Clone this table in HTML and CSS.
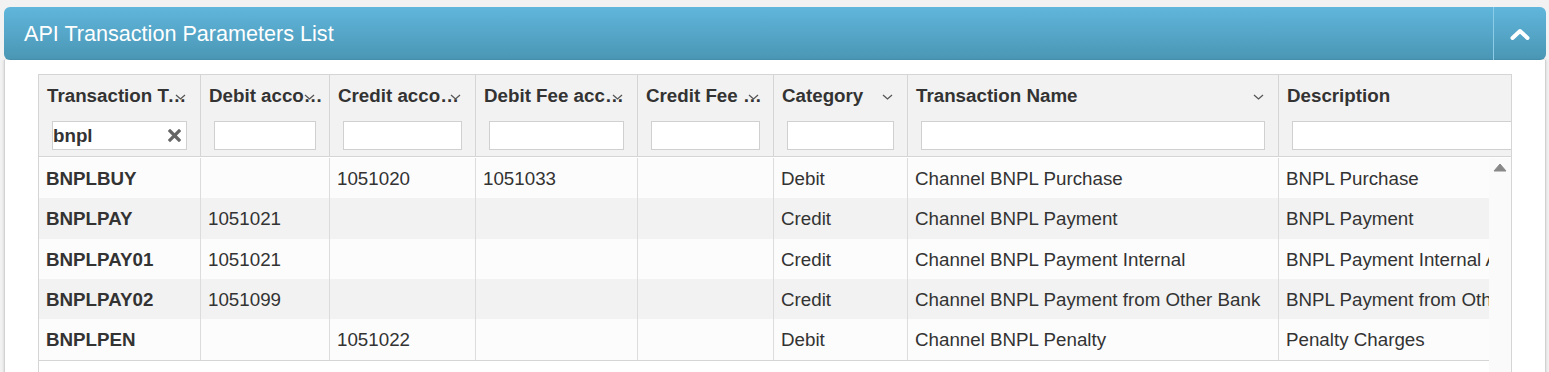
FILE: index.html
```html
<!DOCTYPE html>
<html lang="en">
<head>
<meta charset="utf-8">
<title>API Transaction Parameters List</title>
<link rel="stylesheet" href="styles.css">
</head>
<body>
<div class="panel">
  <div class="panel-head">
    <h2 class="panel-title">API Transaction Parameters List</h2>
    <button class="collapse-btn" type="button" aria-label="Collapse">
      <svg width="20" height="12" viewBox="0 0 20 12"><polyline points="2.5,10 10,3 17.5,10" fill="none" stroke="#fff" stroke-width="4" stroke-linecap="round" stroke-linejoin="round"/></svg>
    </button>
  </div>
  <div class="panel-body">
    <div class="grid">
      <div class="grid-head">
        <div class="hcell"><div class="htitle">Transaction Type</div><svg class="sort" width="11" height="6" viewBox="0 0 11 6"><polyline points="1,1 5.5,5 10,1" fill="none" stroke="#555" stroke-width="1.3"/></svg><div class="filter"><input class="finput" type="text" value="bnpl"><svg class="clear" width="13" height="13" viewBox="0 0 13 13"><path d="M2 2 L11 11 M11 2 L2 11" stroke="#666" stroke-width="3.2" stroke-linecap="square"/></svg></div></div>
        <div class="hcell"><div class="htitle">Debit account</div><svg class="sort" width="11" height="6" viewBox="0 0 11 6"><polyline points="1,1 5.5,5 10,1" fill="none" stroke="#555" stroke-width="1.3"/></svg><div class="filter"><input class="finput" type="text"></div></div>
        <div class="hcell"><div class="htitle">Credit account</div><svg class="sort" width="11" height="6" viewBox="0 0 11 6"><polyline points="1,1 5.5,5 10,1" fill="none" stroke="#555" stroke-width="1.3"/></svg><div class="filter"><input class="finput" type="text"></div></div>
        <div class="hcell"><div class="htitle">Debit Fee account</div><svg class="sort" width="11" height="6" viewBox="0 0 11 6"><polyline points="1,1 5.5,5 10,1" fill="none" stroke="#555" stroke-width="1.3"/></svg><div class="filter"><input class="finput" type="text"></div></div>
        <div class="hcell"><div class="htitle">Credit Fee account</div><svg class="sort" width="11" height="6" viewBox="0 0 11 6"><polyline points="1,1 5.5,5 10,1" fill="none" stroke="#555" stroke-width="1.3"/></svg><div class="filter"><input class="finput" type="text"></div></div>
        <div class="hcell"><div class="htitle">Category</div><svg class="sort" width="11" height="6" viewBox="0 0 11 6"><polyline points="1,1 5.5,5 10,1" fill="none" stroke="#555" stroke-width="1.3"/></svg><div class="filter"><input class="finput" type="text"></div></div>
        <div class="hcell"><div class="htitle">Transaction Name</div><svg class="sort" width="11" height="6" viewBox="0 0 11 6"><polyline points="1,1 5.5,5 10,1" fill="none" stroke="#555" stroke-width="1.3"/></svg><div class="filter"><input class="finput" type="text"></div></div>
        <div class="hcell"><div class="htitle">Description</div><div class="filter"><input class="finput" type="text"></div></div>
      </div>
      <div class="grid-body">
        <div class="rows">
          <div class="row">
            <div class="cell strong">BNPLBUY</div><div class="cell"></div><div class="cell">1051020</div><div class="cell">1051033</div><div class="cell"></div><div class="cell">Debit</div><div class="cell">Channel BNPL Purchase</div><div class="cell">BNPL Purchase</div>
          </div>
          <div class="row alt">
            <div class="cell strong">BNPLPAY</div><div class="cell">1051021</div><div class="cell"></div><div class="cell"></div><div class="cell"></div><div class="cell">Credit</div><div class="cell">Channel BNPL Payment</div><div class="cell">BNPL Payment</div>
          </div>
          <div class="row">
            <div class="cell strong">BNPLPAY01</div><div class="cell">1051021</div><div class="cell"></div><div class="cell"></div><div class="cell"></div><div class="cell">Credit</div><div class="cell">Channel BNPL Payment Internal</div><div class="cell">BNPL Payment Internal Account</div>
          </div>
          <div class="row alt">
            <div class="cell strong">BNPLPAY02</div><div class="cell">1051099</div><div class="cell"></div><div class="cell"></div><div class="cell"></div><div class="cell">Credit</div><div class="cell">Channel BNPL Payment from Other Bank</div><div class="cell">BNPL Payment from Other Bank</div>
          </div>
          <div class="row">
            <div class="cell strong">BNPLPEN</div><div class="cell"></div><div class="cell">1051022</div><div class="cell"></div><div class="cell"></div><div class="cell">Debit</div><div class="cell">Channel BNPL Penalty</div><div class="cell">Penalty Charges</div>
          </div>
        </div>
        <div class="vscroll">
          <svg class="scroll-up" width="14" height="9" viewBox="0 0 14 9"><path d="M7 1 L13 8 L1 8 Z" fill="#888" stroke="#888" stroke-width="1" stroke-linejoin="round"/></svg>
        </div>
      </div>
    </div>
  </div>
</div>
</body>
</html>
```

FILE: styles.css
```css
html, body {
  margin: 0;
  padding: 0;
  overflow: hidden;
}
body {
  background: #f2f2f2;
  font-family: "Liberation Sans", Arial, sans-serif;
  color: #333;
  padding: 7px 3px 0 4px;
}
.panel {
  width: 1542px;
}
.panel-head {
  height: 53px;
  border-radius: 6px;
  background: linear-gradient(to bottom, #60b6dc 0%, #4a96b4 100%);
  display: flex;
  align-items: center;
  justify-content: space-between;
}
.panel-title {
  margin: 1px 0 0 20px;
  font-size: 21.6px;
  font-weight: normal;
  color: #fff;
}
.collapse-btn {
  width: 53px;
  height: 53px;
  border: 0;
  border-left: 1px solid #8ccce6;
  background: transparent;
  padding: 0;
  display: flex;
  align-items: center;
  justify-content: center;
}
.panel-body {
  background: #fff;
  border-left: 1px solid #d2d2d2;
  border-right: 1px solid #d2d2d2;
  box-shadow: -1px 0 2px rgba(0,0,0,0.08), 1px 0 2px rgba(0,0,0,0.08);
  padding: 14px 33px 0 33px;
  height: 330px;
}
.grid {
  width: 1474px;
  box-sizing: border-box;
  border: 1px solid #d5d5d5;
  border-bottom: 0;
  overflow: hidden;
  height: 320px;
  display: flex;
  flex-direction: column;
}
.grid-head {
  display: grid;
  grid-template-columns: 162px 129px 146px 162px 136px 134px 371px 260px;
  background: #f2f2f2;
  border-bottom: 1px solid #d5d5d5;
}
.hcell {
  position: relative;
  box-sizing: border-box;
  border-right: 1px solid #d5d5d5;
  padding: 10px 0 6px;
  min-width: 0;
}
.htitle {
  font-size: 18.75px;
  font-weight: bold;
  line-height: 22px;
  padding: 0 6px 0 8px;
  white-space: nowrap;
  overflow: hidden;
  text-overflow: ellipsis;
}
.sort {
  position: absolute;
  right: 14px;
  top: 19px;
}
.filter {
  position: relative;
  margin-top: 14px;
  padding: 0 13px;
}
.finput {
  display: block;
  box-sizing: border-box;
  width: 100%;
  height: 29px;
  border: 1px solid #d0d0d0;
  background: #fff;
  font-family: "Liberation Sans", Arial, sans-serif;
  font-size: 18.75px;
  font-weight: bold;
  color: #333;
  padding: 0;
  margin: 0;
  outline: none;
}
.clear {
  position: absolute;
  right: 19px;
  top: 8px;
}
.grid-body {
  display: flex;
  flex: 1;
  padding-top: 1px;
}
.rows {
  width: 1450px;
  overflow: hidden;
  align-self: flex-start;
  border-bottom: 1px solid #d5d5d5;
}
.row {
  display: grid;
  grid-template-columns: 162px 129px 146px 162px 136px 134px 371px 260px;
  height: 40.35px;
  background: #fcfcfc;
}
.row.alt {
  background: #f2f2f2;
}
.cell {
  box-sizing: border-box;
  border-right: 1px solid #dcdcdc;
  padding: 0 7px;
  font-size: 18.75px;
  line-height: 41px;
  white-space: nowrap;
  overflow: hidden;
}
.cell.strong {
  font-weight: bold;
}
.vscroll {
  width: 22px;
  background: #fafafa;
  display: flex;
  justify-content: center;
  padding-top: 5px;
  box-sizing: border-box;
  align-items: flex-start;
}
```
